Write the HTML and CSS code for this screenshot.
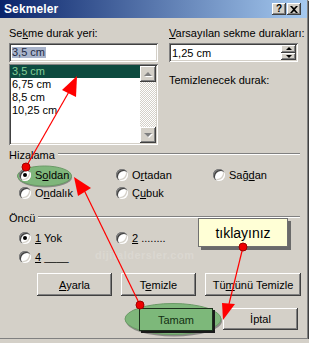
FILE: index.html
```html
<!DOCTYPE html>
<html lang="tr">
<head>
<meta charset="utf-8">
<title>Sekmeler</title>
<link rel="stylesheet" href="styles.css">
</head>
<body>
<div class="window">
  <svg class="under" width="309" height="343" viewBox="0 0 309 343">
    <ellipse cx="45" cy="177.5" rx="27" ry="10" fill="#8a8a86"/>
    <ellipse cx="44.5" cy="176" rx="27" ry="10" fill="#7fb67b" stroke="#6a9a66" stroke-width="1"/>
    <ellipse cx="174" cy="321" rx="48" ry="15.5" fill="#8a8a86"/>
    <ellipse cx="173" cy="319" rx="48" ry="15.5" fill="#7fb67b" stroke="#6a9a66" stroke-width="1"/>
  </svg>
  <div class="titlebar">
    <span class="title">Sekmeler</span>
    <div class="tbtns">
      <span class="tb q">?</span>
      <span class="tb x"><svg width="8" height="7" viewBox="0 0 8 7"><path d="M0 0h2l2 2 2-2h2L5 3.5 8 7H6L4 5 2 7H0l3-3.5z" fill="#000"/></svg></span>
    </div>
  </div>
  <div class="content">
    <div class="top">
      <div class="col-left">
        <div class="lbl">Se<u>k</u>me durak yeri:</div>
        <div class="field"><span class="seltext">3,5 cm</span></div>
        <div class="list">
          <div class="items">
            <div class="item selected">3,5 cm</div>
            <div class="item">6,75 cm</div>
            <div class="item">8,5 cm</div>
            <div class="item">10,25 cm</div>
          </div>
          <div class="vscroll">
            <div class="sbtn"><span class="tri up"></span></div>
            <div class="track"></div>
            <div class="sbtn"><span class="tri down"></span></div>
          </div>
        </div>
      </div>
      <div class="col-right">
        <div class="lbl"><u>V</u>arsayılan sekme durakları:</div>
        <div class="field spin">
          <span class="val">1,25 cm</span>
          <div class="spinbtns">
            <div class="spb"><span class="stri up"></span></div>
            <div class="spb"><span class="stri down"></span></div>
          </div>
        </div>
        <div class="lbl lbl2">Temizlenecek durak:</div>
      </div>
    </div>

    <div class="group"><span class="gtitle">Hizalama</span><span class="etch"></span></div>
    <div class="radios align">
      <label class="radio"><span class="rb on"></span><span class="rt">S<u>o</u>ldan</span></label>
      <label class="radio"><span class="rb"></span><span class="rt">O<u>r</u>tadan</span></label>
      <label class="radio"><span class="rb"></span><span class="rt">Sağ<u>d</u>an</span></label>
      <label class="radio"><span class="rb"></span><span class="rt">O<u>n</u>dalık</span></label>
      <label class="radio"><span class="rb"></span><span class="rt">Ç<u>u</u>buk</span></label>
    </div>

    <div class="group g2"><span class="gtitle">Öncü</span><span class="etch"></span></div>
    <div class="radios leader">
      <label class="radio"><span class="rb on"></span><span class="rt"><u>1</u> Yok</span></label>
      <label class="radio"><span class="rb"></span><span class="rt"><u>2</u> ........</span></label>
      <label class="radio"><span class="rb"></span><span class="rt"><u>4</u> ____</span></label>
    </div>

    <div class="btnrow">
      <span class="btn w75"><span><u>A</u>yarla</span></span>
      <span class="btn w75"><span>T<u>e</u>mizle</span></span>
      <span class="btn w96"><span>Tü<u>m</u>ünü Temizle</span></span>
    </div>
    <div class="btnrow2">
      <span class="btn ok">Tamam</span>
      <span class="btn cancel">İptal</span>
    </div>
  </div>

  <div class="watermark">dijitaldersler.com</div>
  <div class="tooltip">tıklayınız</div>

  <svg class="over" width="309" height="343" viewBox="0 0 309 343">
    <g stroke="#ff0000" stroke-width="1.2" fill="none">
      <line x1="26" y1="167" x2="70" y2="90"/>
      <line x1="140" y1="305" x2="84" y2="190"/>
      <line x1="243" y1="247" x2="229" y2="304"/>
    </g>
    <g fill="#ff0000">
      <polygon points="77,76 62,90 76,97"/>
      <polygon points="74,177 78,196 91,188"/>
      <polygon points="223,320 222,303 235,304"/>
    </g>
    <g fill="#ee0000" stroke="#a00000" stroke-width="1">
      <circle cx="26" cy="167" r="4"/>
      <circle cx="140" cy="305" r="4"/>
      <circle cx="243" cy="247" r="4"/>
    </g>
  </svg>
</div>
</body>
</html>
```

FILE: styles.css
```css
html, body {
  margin: 0;
  padding: 0;
  background: #d4d0c8;
}

body {
  font-family: "Liberation Sans", Arial, sans-serif;
  font-size: 11px;
  color: #000;
}

u {
  text-decoration: underline;
  text-underline-offset: 1px;
}

.window {
  position: relative;
  width: 307px;
  height: 338px;
  background: #d4d0c8;
  border-right: 1px solid #808080;
  border-bottom: 1px solid #808080;
  box-shadow: 1px 1px 0 #404040;
  overflow: hidden;
}

.under {
  position: absolute;
  left: 0;
  top: 0;
  z-index: 0;
}

.over {
  position: absolute;
  left: 0;
  top: 0;
  z-index: 5;
  pointer-events: none;
}

/* Title bar */
.titlebar {
  position: relative;
  z-index: 1;
  height: 18px;
  display: flex;
  align-items: center;
  justify-content: space-between;
  padding: 0 6px 0 4px;
  background: linear-gradient(to right, #0a246a, #a6caf0);
}

.title {
  color: #fff;
  font-weight: bold;
  font-size: 12px;
  letter-spacing: 0.1px;
}

.tbtns {
  display: flex;
  gap: 1px;
}

.tb {
  width: 14px;
  height: 12px;
  display: flex;
  align-items: center;
  justify-content: center;
  background: #d4d0c8;
  box-shadow: inset -1px -1px #404040, inset 1px 1px #fff, inset -2px -2px #808080;
  font-weight: bold;
  font-size: 10px;
  line-height: 12px;
}

/* Content */
.content {
  position: relative;
  z-index: 1;
  padding: 8px 0 0 9px;
}

.top {
  display: flex;
  gap: 11px;
}

.col-left {
  width: 149px;
}

.col-right {
  width: 129px;
}

.lbl {
  height: 14px;
  line-height: 14px;
  white-space: nowrap;
}

.lbl2 {
  margin-top: 11px;
}

.field {
  margin-top: 3px;
  height: 19px;
  background: #fff;
  box-shadow: inset 1px 1px #808080, inset -1px -1px #fff, inset 2px 2px #404040, inset -2px -2px #d4d0c8;
  display: flex;
  align-items: center;
  padding-left: 3px;
  box-sizing: border-box;
}

.seltext {
  background: #a9b4cb;
  color: #1e2a44;
  line-height: 11px;
  padding: 0 1px 0 0;
}

.spin {
  justify-content: space-between;
  padding-right: 2px;
}

.spinbtns {
  display: flex;
  flex-direction: column;
  width: 15px;
  height: 15px;
}

.spb {
  flex: 1;
  display: flex;
  align-items: center;
  justify-content: center;
  background: #d4d0c8;
  box-shadow: inset -1px -1px #404040, inset 1px 1px #fff, inset -2px -2px #808080;
}

.stri {
  width: 0;
  height: 0;
  border-left: 3px solid transparent;
  border-right: 3px solid transparent;
}

.stri.up {
  border-bottom: 3px solid #000;
}

.stri.down {
  border-top: 3px solid #000;
}

/* List */
.list {
  margin-top: 2px;
  height: 81px;
  background: #fff;
  box-shadow: inset 1px 1px #808080, inset -1px -1px #fff, inset 2px 2px #404040, inset -2px -2px #d4d0c8;
  display: flex;
  padding: 1px 2px 2px 1px;
  box-sizing: border-box;
}

.items {
  flex: 1;
}

.item {
  height: 13px;
  line-height: 13px;
  padding-left: 2px;
}

.item.selected {
  background: #0d4a3f;
  color: #84cf98;
}

.vscroll {
  width: 16px;
  display: flex;
  flex-direction: column;
  margin-top: 1px;
}

.sbtn {
  height: 16px;
  display: flex;
  align-items: center;
  justify-content: center;
  background: #d4d0c8;
  box-shadow: inset -1px -1px #404040, inset 1px 1px #fff, inset -2px -2px #808080;
}

.track {
  flex: 1;
  background-color: #fff;
  background-image: repeating-conic-gradient(#d4d0c8 0 25%, #fff 0 50%);
  background-size: 2px 2px;
}

.tri {
  width: 0;
  height: 0;
  border-left: 4px solid transparent;
  border-right: 4px solid transparent;
}

.tri.up {
  border-bottom: 4px solid #808080;
  filter: drop-shadow(1px 1px 0 #fff);
}

.tri.down {
  border-top: 4px solid #808080;
  filter: drop-shadow(1px 1px 0 #fff);
}

/* Groups */
.group {
  margin-top: 3px;
  height: 14px;
  display: flex;
  align-items: center;
  padding-right: 7px;
}

.g2 {
  margin-top: 11px;
}

.gtitle {
  line-height: 14px;
}

.etch {
  flex: 1;
  height: 1px;
  margin-left: 3px;
  margin-top: -3px;
  background: #808080;
  border-bottom: 1px solid #fff;
}

.radios {
  display: grid;
  grid-template-columns: 97px 97px auto;
  padding-left: 10px;
  margin-top: 6px;
}

.radios.align {
  grid-auto-rows: 14px;
  row-gap: 4px;
}

.radios.leader {
  grid-template-columns: 97px auto;
  grid-auto-rows: 14px;
  row-gap: 5px;
}

.radio {
  display: flex;
  align-items: center;
  gap: 4px;
  line-height: 14px;
  white-space: nowrap;
}

.rt {
  white-space: pre;
}

.rb {
  position: relative;
  width: 12px;
  height: 12px;
  border-radius: 50%;
  background: #fff;
  box-shadow: inset 1px 1px #808080, inset 2px 2px #404040, inset -1px -1px #fff, inset -2px -2px #d4d0c8;
  flex: none;
}

.rb.on::after {
  content: "";
  position: absolute;
  left: 4px;
  top: 4px;
  width: 4px;
  height: 4px;
  border-radius: 50%;
  background: #000;
}

/* Buttons */
.btnrow {
  margin-top: 9px;
  display: flex;
  gap: 9px;
  padding-left: 28px;
}

.btnrow2 {
  margin-top: 12px;
  display: flex;
  justify-content: flex-end;
  gap: 10px;
  padding-right: 9px;
}

.btn {
  height: 23px;
  display: flex;
  align-items: center;
  justify-content: center;
  background: #d4d0c8;
  box-shadow: inset -1px -1px #404040, inset 1px 1px #fff, inset -2px -2px #808080;
  box-sizing: border-box;
  white-space: nowrap;
}

.w75 {
  width: 75px;
}

.w96 {
  width: 96px;
}

.ok {
  width: 74px;
  background: #7db87a;
  color: #133013;
  border: 1px solid #1c301c;
  box-shadow: 2px 2px 0 #1a1a1a;
}

.cancel {
  width: 75px;
  height: 22px;
}

/* Overlays */
.watermark {
  position: absolute;
  left: 95px;
  top: 249px;
  z-index: 2;
  font-weight: bold;
  font-size: 11px;
  color: rgba(255, 255, 255, 0.18);
  letter-spacing: 0.5px;
}

.tooltip {
  position: absolute;
  left: 198px;
  top: 218px;
  z-index: 4;
  width: 90px;
  height: 29px;
  box-sizing: border-box;
  background: #ffffd6;
  border: 1px solid #707070;
  box-shadow: 3px 3px 0 #6a6a6a;
  display: flex;
  align-items: center;
  justify-content: center;
  font-size: 14px;
}
```
